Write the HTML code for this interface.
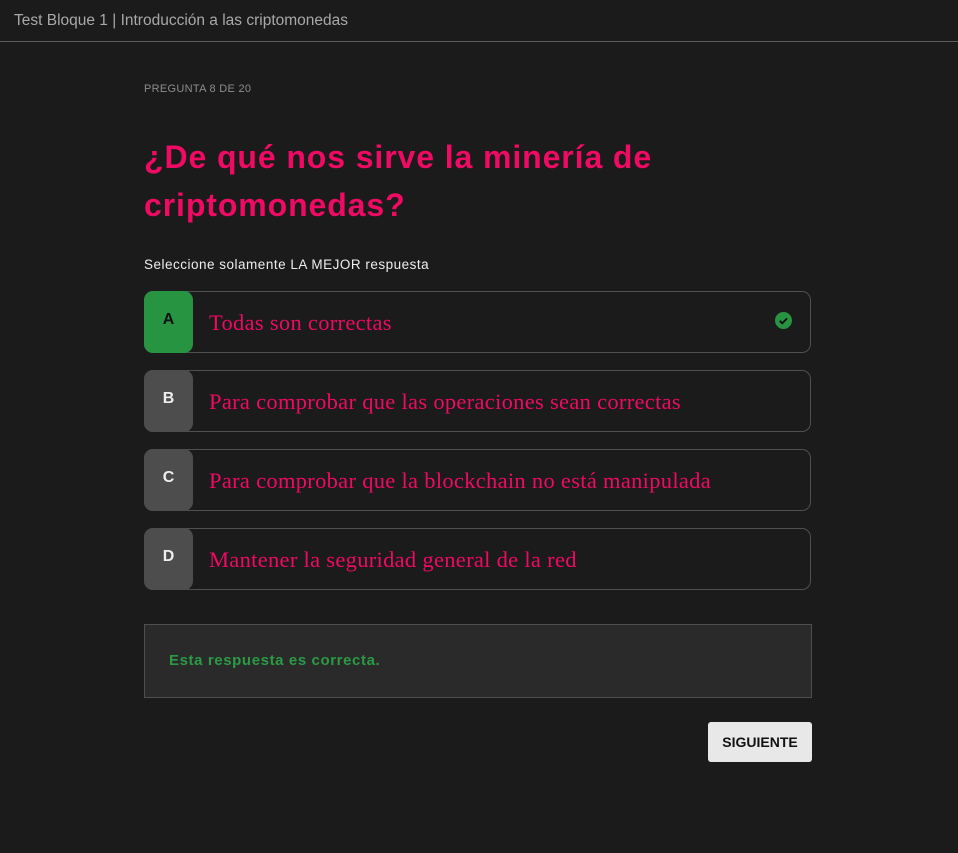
<!DOCTYPE html>
<html><head><meta charset="utf-8"><style>
body{margin:0;background:#1b1b1b;width:958px;height:853px;overflow:hidden;font-family:"Liberation Sans",sans-serif}
.top{height:42px;border-bottom:1px solid #5a5a5a;color:#a8a8a8;font-size:15.5px;line-height:41px;padding-left:14px;box-sizing:border-box}
.pq{position:absolute;left:144px;top:83px;color:#8d8d8d;font-size:11px;letter-spacing:0.3px}
h1{position:absolute;left:144px;top:133px;margin:0;color:#ef0a63;font-size:32px;line-height:48px;font-weight:bold;width:640px;letter-spacing:0.9px}
.sel{position:absolute;left:144px;top:257px;color:#eee;font-size:13.5px;letter-spacing:0.5px}
.opt{position:absolute;left:144px;width:665px;height:60px;border:1px solid #505050;border-radius:9px}
.opt .l{position:absolute;left:-1px;top:-1px;width:49px;height:62px;border-radius:9px;background:#4d4d4d;color:#eee;font-weight:bold;font-size:16px;text-align:center;line-height:58px}
.opt .t{position:absolute;left:64px;top:0;line-height:62px;color:#ef0a63;font-family:"Liberation Serif",serif;font-size:22.5px;letter-spacing:0.3px;white-space:nowrap}
.fb{position:absolute;left:144px;top:624px;background:#2a2a2a;border:1px solid #4f4f4f;color:#2b9a45;font-weight:bold;font-size:15px;letter-spacing:0.6px;line-height:72px;padding-left:24px;box-sizing:border-box;width:668px;height:74px}
.btn{position:absolute;left:708px;top:722px;width:104px;height:40px;background:#e8e8e8;border-radius:3px;color:#111;font-weight:bold;font-size:14px;text-align:center;line-height:40px}
</style></head><body>
<div class="top">Test Bloque 1 | Introducción a las criptomonedas</div>
<div class="pq">PREGUNTA 8 DE 20</div>
<h1>¿De qué nos sirve la minería de criptomonedas?</h1>
<div class="sel">Seleccione solamente LA MEJOR respuesta</div>
<div class="opt" style="top:291px"><div class="l" style="background:#279442;color:#111">A</div><div class="t">Todas son correctas</div>
<svg style="position:absolute;left:630px;top:20px" width="17" height="17" viewBox="0 0 16 16"><circle cx="8" cy="8" r="8" fill="#279442"/><path d="M4.5 8.3l2.3 2.3 4.5-4.6" stroke="#111" stroke-width="1.8" fill="none"/></svg></div>
<div class="opt" style="top:370px"><div class="l">B</div><div class="t">Para comprobar que las operaciones sean correctas</div></div>
<div class="opt" style="top:449px"><div class="l">C</div><div class="t">Para comprobar que la blockchain no está manipulada</div></div>
<div class="opt" style="top:528px"><div class="l">D</div><div class="t">Mantener la seguridad general de la red</div></div>
<div class="fb">Esta respuesta es correcta.</div>
<div class="btn">SIGUIENTE</div>
</body></html>
